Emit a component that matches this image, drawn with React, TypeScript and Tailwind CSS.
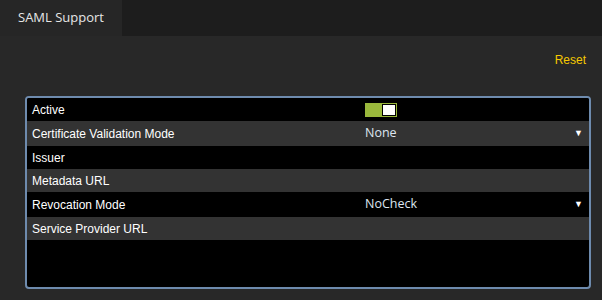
import { ReactNode } from "react";

type Row = { label: string; value?: ReactNode; select?: boolean; alt?: boolean };

function Toggle() {
  return (
    <div className="flex h-[14px] w-[32px] items-center justify-end bg-[#9ab83c] pr-[1px]">
      <div className="h-[12px] w-[14px] border border-black bg-white" />
    </div>
  );
}

const rows: Row[] = [
  { label: "Active", value: <Toggle /> },
  { label: "Certificate Validation Mode", value: "None", select: true, alt: true },
  { label: "Issuer" },
  { label: "Metadata URL", alt: true },
  { label: "Revocation Mode", value: "NoCheck", select: true },
  { label: "Service Provider URL", alt: true },
];

function App() {
  return (
    <div className="h-[300px] w-[602px] overflow-hidden bg-[#282828] font-['Liberation_Sans',Arial,sans-serif]">
      <div className="flex h-[36px] bg-[#1d1d1d]">
        <div className="flex w-[122px] items-center justify-center bg-[#262626] font-['Open_Sans',sans-serif] text-[13px] text-[#e6e6e6]">
          SAML Support
        </div>
      </div>
      <div className="flex justify-end pt-[15px] pr-[16px] text-[12px] text-[#f5c800]">Reset</div>
      <div className="mt-[27px] ml-[25px] h-[193px] w-[566px] overflow-hidden rounded-[4px] border-2 border-[#6e8bae] bg-black">
        {rows.map((r) => (
          <div
            key={r.label}
            className={`flex items-center ${r.select ? "h-[25px]" : "h-[23px]"} ${r.alt ? "bg-[#333333]" : "bg-black"}`}
          >
            <div className="w-[338px] pl-[5px] text-[12px] text-white">{r.label}</div>
            <div className="flex flex-1 items-center font-['Open_Sans',sans-serif] text-[12.5px] text-[#dde6f0]">
              {r.value}
            </div>
            {r.select && <div className="pr-[6px] text-[9px] text-white">▼</div>}
          </div>
        ))}
      </div>
    </div>
  );
}

export default App;
